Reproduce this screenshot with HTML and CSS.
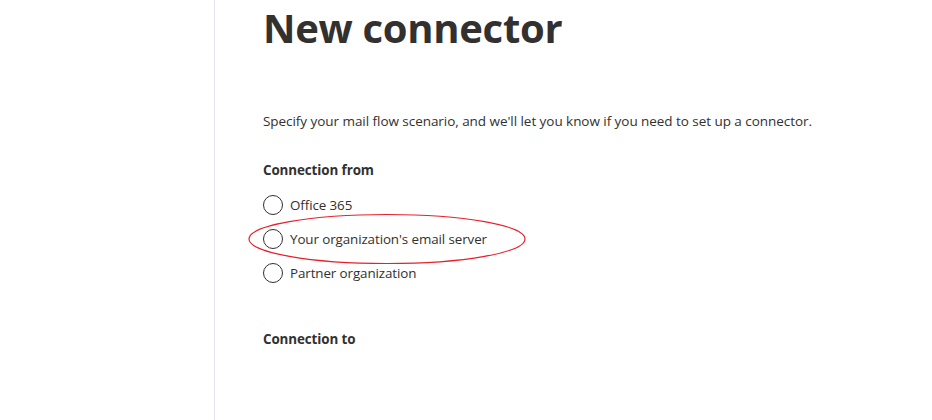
FILE: index.html
```html
<!DOCTYPE html>
<html lang="en">
<head>
<meta charset="utf-8">
<title>New connector</title>
<link rel="stylesheet" href="styles.css">
</head>
<body>
<div class="page">
  <aside class="nav"></aside>
  <main class="panel">
    <h1 class="title">New connector</h1>
    <p class="desc">Specify your mail flow scenario, and we'll let you know if you need to set up a connector.</p>
    <div class="group">
      <div class="label">Connection from</div>
      <div class="options">
        <label class="option"><span class="radio"></span><span class="opt-text">Office 365</span></label>
        <label class="option highlighted"><span class="radio"></span><span class="opt-text">Your organization's email server</span>
          <svg class="ring" width="284" height="54" viewBox="0 0 284 54"><ellipse cx="142" cy="27" rx="138" ry="24.5" fill="none" stroke="#e8202a" stroke-width="1.2"/></svg>
        </label>
        <label class="option"><span class="radio"></span><span class="opt-text">Partner organization</span></label>
      </div>
    </div>
    <div class="group to">
      <div class="label">Connection to</div>
    </div>
  </main>
</div>
</body>
</html>
```
FILE: styles.css
```css
html, body {
  margin: 0;
  padding: 0;
  background: #ffffff;
}
body {
  font-family: "Open Sans", "Noto Sans", sans-serif;
  color: #323130;
  overflow: hidden;
}
.page {
  display: flex;
  height: 420px;
}
.nav {
  width: 214px;
  flex: none;
  border-right: 1px solid #e4e2f3;
}
.panel {
  padding-left: 48px;
  flex: 1;
}
.title {
  margin: 0;
  padding-top: 2px;
  font-size: 40px;
  line-height: 52px;
  font-weight: 700;
  color: #323130;
  letter-spacing: -0.3px;
}
.desc {
  margin: 57px 0 0;
  font-size: 13.5px;
  line-height: 20px;
  letter-spacing: -0.05px;
}
.group {
  margin-top: 29px;
}
.label {
  font-size: 13.4px;
  font-weight: 700;
  line-height: 20px;
  letter-spacing: -0.1px;
}
.options {
  margin-top: 15px;
  display: flex;
  flex-direction: column;
  gap: 14px;
}
.option {
  position: relative;
  display: flex;
  align-items: center;
  gap: 7px;
  height: 20px;
  font-size: 13.4px;
  letter-spacing: -0.1px;
}
.radio {
  width: 18px;
  height: 18px;
  border: 1px solid #323130;
  border-radius: 50%;
  flex: none;
}
.ring {
  position: absolute;
  left: -18px;
  top: -17px;
}
.group.to {
  margin-top: 46px;
}
```
